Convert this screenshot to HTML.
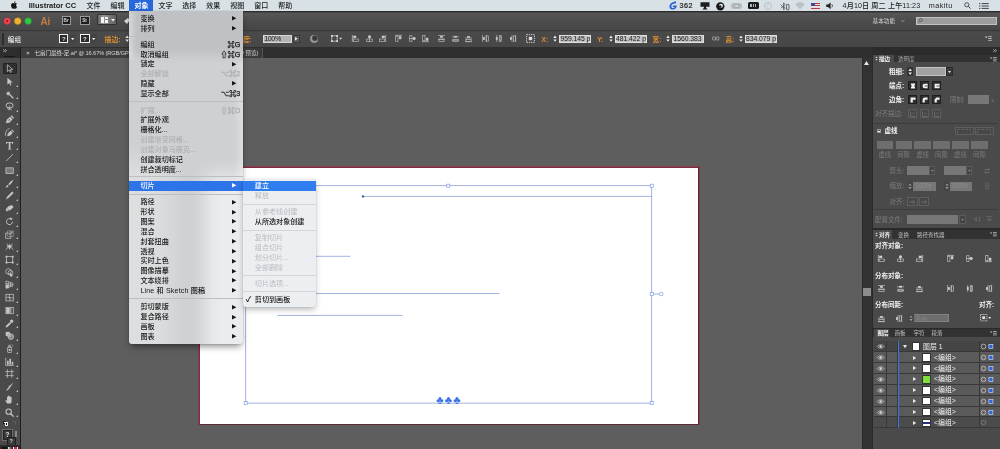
<!DOCTYPE html>
<html lang="zh"><head><meta charset="utf-8"><title>Illustrator CC</title>
<style>
html,body{margin:0;padding:0}
body{width:1000px;height:449px;overflow:hidden;position:relative;background:#5e5e5e;font-family:"Liberation Sans","Noto Sans CJK SC",sans-serif;}
div{position:absolute;box-sizing:border-box}
.t{white-space:nowrap}
svg{position:absolute;overflow:visible}
#root{left:0;top:0;width:1000px;height:449px;overflow:hidden;will-change:transform}
</style></head><body><div id="root">

<div style="left:0px;top:57.5px;width:1000px;height:392px;background:#5e5e5e"></div>
<div style="left:197.6px;top:166px;width:502.4px;height:259.4px;border-style:solid;border-width:1.4px 1.2px 1.2px 1.2px;border-color:#8e3c50 #823a42 #823a42 #8e3c50;background:#6a2c3a;box-shadow:0 0 1.6px 0.4px rgba(150,50,75,.5)"></div>
<div style="left:198.8px;top:167.4px;width:500.2px;height:257.2px;border-style:solid;border-width:1.1px 1px 1px 1px;border-color:#7a2e40 #5a2a30 #5a2a30 #7a2e40;background:#fff"></div>
<div style="left:199.7px;top:168.5px;width:498.4px;height:255.2px;background:#fff"></div>
<svg style="left:0;top:0" width="1000" height="449" viewBox="0 0 1000 449">
<g fill="none" stroke="#8499d6" stroke-width="0.75">
<rect x="245.7" y="185.7" width="406" height="217.4"/>
<line x1="363" y1="196.4" x2="651.7" y2="196.4"/>
<line x1="246" y1="256.3" x2="350.5" y2="256.3"/>
<line x1="246" y1="293.5" x2="499.5" y2="293.5"/>
<line x1="277.5" y1="315.4" x2="402.5" y2="315.4"/>
<line x1="652" y1="294" x2="660" y2="294"/>
</g>
<g fill="#fff" stroke="#7f9de3" stroke-width="0.7">
<rect x="446.8" y="184.2" width="3" height="3"/>
<rect x="650.2" y="184.2" width="3" height="3"/>
<rect x="650.2" y="292.5" width="3" height="3"/>
<rect x="650.2" y="401.6" width="3" height="3"/>
<rect x="244.2" y="401.6" width="3" height="3"/>
<rect x="659.7" y="292.4" width="3.2" height="3.2" rx="0.8"/>
</g>
<circle cx="363" cy="196.4" r="1.2" fill="#46579b"/>
</svg>
<div class="t" style="left:436.3px;top:394.2px;font-size:11.4px;line-height:12px;color:#3f74e2;font-weight:400;letter-spacing:1px">♣♣♣</div>
<div style="left:0px;top:0px;width:1000px;height:11.3px;background:#d8e1e6"></div>
<svg style="left:10.9px;top:1.1px" width="6.6" height="8" viewBox="0 0 14 17"><path fill="#161616" d="M10.9 9c0-2 1.600-2.900 1.700-3-0.900-1.400-2.400-1.600-2.900-1.600-1.200-0.100-2.400 0.700-3 0.700s-1.600-0.700-2.600-0.700c-1.300 0-2.600 0.800-3.300 2-1.400 2.400-0.400 6.100 1 8.100 0.700 1 1.500 2.100 2.500 2 1 0 1.400-0.600 2.600-0.600s1.500 0.600 2.600 0.600 1.800-1 2.400-2c0.800-1.100 1.100-2.200 1.100-2.300 0 0-2.100-0.800-2.100-3.200zM8.900 3c0.500-0.700 0.900-1.600 0.800-2.500-0.800 0-1.700 0.500-2.300 1.200-0.500 0.600-0.900 1.500-0.800 2.400 0.900 0.100 1.800-0.400 2.300-1.100z"/></svg>
<div class="t" style="left:28.7px;top:1.0999999999999996px;font-size:7.5px;line-height:10px;color:#1c1c1c;font-weight:700;">Illustrator CC</div>
<div class="t" style="left:86.4px;top:1.0999999999999996px;font-size:7px;line-height:10px;color:#1c1c1c;font-weight:500;">文件</div>
<div class="t" style="left:110.4px;top:1.0999999999999996px;font-size:7px;line-height:10px;color:#1c1c1c;font-weight:500;">编辑</div>
<div style="left:129.4px;top:0px;width:23.8px;height:11.3px;background:#2668db"></div>
<div class="t" style="left:134.4px;top:1.0999999999999996px;font-size:7px;line-height:10px;color:#fff;font-weight:700;">对象</div>
<div class="t" style="left:158.5px;top:1.0999999999999996px;font-size:7px;line-height:10px;color:#1c1c1c;font-weight:500;">文字</div>
<div class="t" style="left:182.3px;top:1.0999999999999996px;font-size:7px;line-height:10px;color:#1c1c1c;font-weight:500;">选择</div>
<div class="t" style="left:206.2px;top:1.0999999999999996px;font-size:7px;line-height:10px;color:#1c1c1c;font-weight:500;">效果</div>
<div class="t" style="left:230.2px;top:1.0999999999999996px;font-size:7px;line-height:10px;color:#1c1c1c;font-weight:500;">视图</div>
<div class="t" style="left:254.2px;top:1.0999999999999996px;font-size:7px;line-height:10px;color:#1c1c1c;font-weight:500;">窗口</div>
<div class="t" style="left:278.2px;top:1.0999999999999996px;font-size:7px;line-height:10px;color:#1c1c1c;font-weight:500;">帮助</div>
<svg style="left:669.2px;top:1.3px" width="8.8" height="8.8" viewBox="0 0 20 20"><path fill="#2a62dc" d="M15.500 0.500c-2 1-4.500 1.500-7 2.500C4 4.800 0.800 8.500 1 13c0.200 4 3.500 6.500 7.500 6.500 5 0 9-3.500 9.500-9H9.500l-1 3.200h4.200c-0.800 1.300-2 2-3.700 2-2.300 0-3.800-1.500-3.600-4 0.200-3 2.500-5 5.600-5.600 2-0.400 3.600-0.600 5.200-1.800z"/></svg>
<div class="t" style="left:679.6px;top:1.0999999999999996px;font-size:7.2px;line-height:10px;color:#1c1c1c;font-weight:500;letter-spacing:0.4px;-webkit-text-stroke:0.2px #1c1c1c">362</div>
<svg style="left:700px;top:2px" width="10" height="8" viewBox="0 0 10 8"><path fill="#1e1e1e" d="M0.500 0.300h9v4.400h-3.400v1.200l1.600 1.500h-5.400l1.600-1.500v-1.200h-3.400z"/></svg>
<svg style="left:716px;top:1.500px" width="8.600" height="8.600" viewBox="0 0 10 10"><circle cx="5" cy="5" r="4.800" fill="#161616"/><circle cx="5.800" cy="4.300" r="2.300" fill="#eef1f3"/><circle cx="4.900" cy="5.300" r="1.500" fill="#161616"/></svg>
<div style="left:731.2px;top:2.8px;width:10.6px;height:6px;background:#b3b9bd;border-radius:3px"></div>
<div style="left:734px;top:4px;width:5px;height:3.6px;background:#cdd3d7;border-radius:1.2px;border:0.500px solid #a3a9ad"></div>
<div style="left:748.4px;top:2.2px;width:10.2px;height:7px;background:#1a1a1a;border-radius:1.600px"></div>
<div style="left:750.2px;top:4px;width:1.4px;height:3.4px;background:#aeb4b8"></div>
<div style="left:752.6px;top:4px;width:1.4px;height:3.4px;background:#aeb4b8"></div>
<div style="left:755px;top:4px;width:1.4px;height:3.4px;background:#aeb4b8"></div>
<div style="left:764.4px;top:1.8px;width:8px;height:8px;border:1px solid #b9c0c4;border-radius:50%"></div>
<svg style="left:764.4px;top:1.8px" width="8" height="8" viewBox="0 0 8 8"><path d="M4 1.8V4L2.6 5" stroke="#b9c0c4" stroke-width="0.8" fill="none"/></svg>
<svg style="left:780.400px;top:1.5px" width="10" height="8.6" viewBox="0 0 10 8.6"><path d="M0.800 2.600L3.600 5.800V0.800L5.200 2.600 0.800 6.200M3.600 8V4.300L5.200 6.200 3.600 8" stroke="#555" stroke-width="0.8" fill="none"/><rect x="6.6" y="2.4" width="2.400" height="5.400" rx="0.500" fill="none" stroke="#333" stroke-width="0.700"/></svg>
<svg style="left:795px;top:2px" width="10" height="7.4" viewBox="0 0 10 7.4"><path fill="#bcc3c7" d="M5 7.2L0.2 2.2C2.9-0.4 7.1-0.4 9.8 2.2z"/></svg>
<div style="left:811.4px;top:2.6px;width:8.8px;height:6px;background:repeating-linear-gradient(#b83a45 0 0.9px,#e6dfe2 0.9px 1.8px)"></div>
<div style="left:811.4px;top:2.6px;width:4px;height:3.3px;background:#3b4c96"></div>
<svg style="left:825.6px;top:2px" width="8.4" height="7.6" viewBox="0 0 8.4 7.6"><path fill="#222" d="M0.2 2.6h1.8L4.6 0.4v6.8L2 5H0.2z"/><path d="M5.8 2.3c0.8 0.9 0.8 2.1 0 3" stroke="#222" stroke-width="0.8" fill="none"/></svg>
<div class="t" style="left:842.6px;top:1.0999999999999996px;font-size:7.1px;line-height:10px;color:#1c1c1c;font-weight:500;letter-spacing:0.13px">4月10日 周二 上午11:23</div>
<div class="t" style="left:928.8px;top:1.0999999999999996px;font-size:7.2px;line-height:10px;color:#1c1c1c;font-weight:500;letter-spacing:0.45px">makitu</div>
<svg style="left:963.6px;top:2.2px" width="7" height="7" viewBox="0 0 7 7"><circle cx="2.8" cy="2.8" r="2.1" stroke="#333" stroke-width="0.8" fill="none"/><path d="M4.3 4.3L6.6 6.6" stroke="#333" stroke-width="0.9"/></svg>
<svg style="left:978.6px;top:2.8px" width="10" height="6" viewBox="0 0 10 6"><path d="M0 0.6h1.4M2.6 0.6h7.2M0 3h1.4M2.6 3h7.2M0 5.4h1.4M2.6 5.4h7.2" stroke="#333" stroke-width="0.9"/></svg>
<div style="left:0px;top:11.3px;width:1000px;height:18.4px;background:linear-gradient(#2a2a2a 0,#2e2e2e 5%,#565656 10%,#4d4d4d 50%,#464646 100%)"></div>
<svg style="left:0;top:11px" width="40" height="20" viewBox="0 0 40 20"><circle cx="7.2" cy="10.1" r="3.35" fill="#ee4750" stroke="#b8323a" stroke-width="0.5"/><circle cx="7.2" cy="10.1" r="1.1" fill="#8c1219"/><circle cx="17.7" cy="10.1" r="3.35" fill="#f3b02e" stroke="#c08a22" stroke-width="0.5"/><circle cx="28.1" cy="10.1" r="3.35" fill="#33c646" stroke="#23952f" stroke-width="0.5"/></svg>
<div class="t" style="left:40.4px;top:15.8px;font-size:10px;line-height:12px;color:#c87a42;font-weight:700;">Ai</div>
<div style="left:62px;top:16.4px;width:9.2px;height:8.8px;background:#1d1d1d;border:0.9px solid #9a9a9a"></div>
<div class="t" style="left:63.6px;top:17.9px;font-size:4.6px;line-height:6px;color:#ddd;font-weight:700;">Br</div>
<div style="left:80.2px;top:16.4px;width:9.4px;height:8.8px;background:#1d1d1d;border:0.9px solid #9a9a9a"></div>
<div class="t" style="left:82.3px;top:17.9px;font-size:4.6px;line-height:6px;color:#ddd;font-weight:700;">St</div>
<div style="left:97px;top:14.4px;width:19.8px;height:10.4px;background:linear-gradient(90deg,#6c6c6c,#979797 32%,#787878 65%,#626262);border-radius:1.2px;border:0.6px solid #303030"></div>
<div style="left:100.6px;top:16.5px;width:3.4px;height:6.4px;background:#f4f4f4"></div>
<div style="left:104.8px;top:16.5px;width:3px;height:2.8px;background:#f4f4f4"></div>
<div style="left:104.8px;top:20.1px;width:3px;height:2.8px;background:#f4f4f4"></div>
<svg style="left:110.6px;top:18.8px" width="4" height="2.6" viewBox="0 0 4 2.6"><path d="M0 0h4L2 2.6z" fill="#f0f0f0"/></svg>
<svg style="left:122.5px;top:17px" width="8" height="8" viewBox="0 0 8 8"><path d="M1 4l4-3 2 2-3 4z" fill="#ddd"/></svg>
<div class="t" style="left:872.6px;top:17.0px;font-size:5.6px;line-height:8px;color:#d6d6d6;font-weight:400;">基本功能</div>
<svg style="left:900.6px;top:20.4px" width="3.6" height="2.2" viewBox="0 0 3.6 2.2"><path d="M0.2 0.2L1.8 1.8 3.4 0.2" stroke="#bbb" stroke-width="0.7" fill="none"/></svg>
<div style="left:915.8px;top:17px;width:81px;height:8px;background:#9c9c9c;border:0.6px solid #c2c2c2"></div>
<svg style="left:918.2px;top:18.4px" width="5" height="5" viewBox="0 0 5 5"><circle cx="3" cy="2" r="1.5" stroke="#555" stroke-width="0.7" fill="none"/><path d="M1.9 3.1L0.4 4.6" stroke="#555" stroke-width="0.8"/></svg>
<div style="left:0px;top:29.7px;width:1000px;height:17.5px;background:linear-gradient(#3a3a3a 0,#3a3a3a 5%,#4a4a4a 10%,#474747 100%)"></div>
<div style="left:2.2px;top:33px;width:1.6px;height:12px;background:#2c2c2c"></div>
<div class="t" style="left:7.8px;top:35.0px;font-size:6.6px;line-height:9px;color:#f2f2f2;font-weight:500;">编组</div>
<div style="left:58.8px;top:34px;width:9.6px;height:9.2px;background:#2a2a2a;border:1px solid #f2f2f2"></div>
<div class="t" style="left:61.9px;top:34.7px;font-size:6px;line-height:8px;color:#e8e8e8;font-weight:700;">?</div>
<div style="left:69.8px;top:34.4px;width:6px;height:8.6px;background:#434343"></div>
<svg style="left:71.2px;top:37.8px" width="3.4" height="2.2" viewBox="0 0 3.4 2.2"><path d="M0 0h3.4L1.7 2.2z" fill="#e6e6e6"/></svg>
<div style="left:80px;top:34px;width:9.6px;height:9.2px;background:#2a2a2a;border:1px solid #f2f2f2"></div>
<div class="t" style="left:83.1px;top:34.7px;font-size:6px;line-height:8px;color:#e8e8e8;font-weight:700;">?</div>
<div style="left:91px;top:34.4px;width:6px;height:8.6px;background:#434343"></div>
<svg style="left:92.4px;top:37.8px" width="3.4" height="2.2" viewBox="0 0 3.4 2.2"><path d="M0 0h3.4L1.7 2.2z" fill="#e6e6e6"/></svg>
<div class="t" style="left:104.6px;top:35.0px;font-size:6.8px;line-height:9px;color:#dc8e30;font-weight:700;">描边:</div>
<svg style="left:124.6px;top:35px" width="4.4" height="7.6" viewBox="0 0 4.4 7.6"><path d="M0.4 3L2.2 0.6 4 3zM0.4 4.6h3.6L2.2 7z" fill="#eee"/></svg>
<div class="t" style="left:236.6px;top:35.0px;font-size:6.8px;line-height:9px;color:#dc8e30;font-weight:700;letter-spacing:-0.5px">明度:</div>
<div style="left:263px;top:34.6px;width:29.2px;height:8.2px;background:#b4b4b4;border:0.5px solid #d8d8d8"></div>
<div class="t" style="left:264.2px;top:34.8px;font-size:7px;line-height:8px;color:#1e1e1e;font-weight:400;letter-spacing:-0.3px">100%</div>
<div style="left:293.4px;top:34.6px;width:6.4px;height:8.2px;background:#5b5b5b;border:0.5px solid #383838"></div>
<svg style="left:295.4px;top:37px" width="2.6" height="3.6" viewBox="0 0 2.6 3.6"><path d="M0 0l2.6 1.8L0 3.6z" fill="#eee"/></svg>
<div style="left:310px;top:34.6px;width:8.2px;height:8.2px;background:radial-gradient(circle at 60% 40%,#3a3a3a 0,#3a3a3a 30%,#aaa 55%,#777 75%,#3c3c3c 100%);border-radius:50%"></div>
<svg style="left:331.4px;top:35.2px" width="11.4" height="7.4" viewBox="0 0 13 8.4"><rect x="1" y="1" width="6" height="6" fill="none" stroke="#ddd" stroke-width="0.8"/><path d="M0 0h2v2H0zM6 0h2v2H6zM0 6h2v2H0zM6 6h2v2H6z" fill="#ddd"/><path d="M9.4 3.2h3.2L11 5.4z" fill="#ddd"/></svg>
<svg style="left:352.1px;top:35.2px" width="7.0" height="7.0" viewBox="0 0 8 8"><path d="M0.4 0v8" stroke="#c8c8c8" stroke-width="0.8"/><rect x="1.4" y="0.8" width="3.4" height="2.6" fill="#c8c8c8"/><rect x="1.4" y="4.6" width="6" height="2.6" fill="none" stroke="#c8c8c8" stroke-width="0.7"/></svg>
<svg style="left:365.5px;top:35.2px" width="7.0" height="7.0" viewBox="0 0 8 8"><path d="M4 0v8" stroke="#c8c8c8" stroke-width="0.7"/><rect x="2.4" y="0.8" width="3.2" height="2.6" fill="#c8c8c8"/><rect x="0.8" y="4.6" width="6.4" height="2.6" fill="none" stroke="#c8c8c8" stroke-width="0.7"/></svg>
<svg style="left:378.9px;top:35.2px" width="7.0" height="7.0" viewBox="0 0 8 8"><path d="M7.6 0v8" stroke="#c8c8c8" stroke-width="0.8"/><rect x="3.2" y="0.8" width="3.4" height="2.6" fill="#c8c8c8"/><rect x="0.6" y="4.6" width="6" height="2.6" fill="none" stroke="#c8c8c8" stroke-width="0.7"/></svg>
<svg style="left:395.1px;top:35.2px" width="7.0" height="7.0" viewBox="0 0 8 8"><path d="M0 0.4h8" stroke="#c8c8c8" stroke-width="0.8"/><rect x="0.8" y="1.4" width="2.6" height="6" fill="none" stroke="#c8c8c8" stroke-width="0.7"/><rect x="4.6" y="1.4" width="2.6" height="3.4" fill="#c8c8c8"/></svg>
<svg style="left:408.5px;top:35.2px" width="7.0" height="7.0" viewBox="0 0 8 8"><path d="M0 4h8" stroke="#c8c8c8" stroke-width="0.7"/><rect x="0.8" y="0.8" width="2.6" height="6.4" fill="none" stroke="#c8c8c8" stroke-width="0.7"/><rect x="4.6" y="2.4" width="2.6" height="3.2" fill="#c8c8c8"/></svg>
<svg style="left:422.1px;top:35.2px" width="7.0" height="7.0" viewBox="0 0 8 8"><path d="M0 7.6h8" stroke="#c8c8c8" stroke-width="0.8"/><rect x="0.8" y="0.6" width="2.6" height="6" fill="none" stroke="#c8c8c8" stroke-width="0.7"/><rect x="4.6" y="3.2" width="2.6" height="3.4" fill="#c8c8c8"/></svg>
<svg style="left:438.1px;top:35.2px" width="7.0" height="7.0" viewBox="0 0 8 8"><path d="M0 0.6h8M0 4.6h8" stroke="#c8c8c8" stroke-width="0.7"/><rect x="2.4" y="1.2" width="3.2" height="2" fill="#c8c8c8"/><rect x="1" y="5.2" width="6" height="2.2" fill="none" stroke="#c8c8c8" stroke-width="0.7"/></svg>
<svg style="left:451.7px;top:35.2px" width="7.0" height="7.0" viewBox="0 0 8 8"><path d="M0 2h8M0 6h8" stroke="#c8c8c8" stroke-width="0.7"/><rect x="2.4" y="1" width="3.2" height="2" fill="#c8c8c8"/><rect x="1" y="4.8" width="6" height="2.4" fill="none" stroke="#c8c8c8" stroke-width="0.7"/></svg>
<svg style="left:465.3px;top:35.2px" width="7.0" height="7.0" viewBox="0 0 8 8"><path d="M0 3.4h8M0 7.6h8" stroke="#c8c8c8" stroke-width="0.7"/><rect x="2.4" y="1.2" width="3.2" height="2" fill="#c8c8c8"/><rect x="1" y="5" width="6" height="2.2" fill="none" stroke="#c8c8c8" stroke-width="0.7"/></svg>
<svg style="left:481.5px;top:35.2px" width="7.0" height="7.0" viewBox="0 0 8 8"><path d="M0.6 0v8M4.6 0v8" stroke="#c8c8c8" stroke-width="0.7"/><rect x="1.2" y="2.4" width="2" height="3.2" fill="#c8c8c8"/><rect x="5.2" y="1" width="2.2" height="6" fill="none" stroke="#c8c8c8" stroke-width="0.7"/></svg>
<svg style="left:495.1px;top:35.2px" width="7.0" height="7.0" viewBox="0 0 8 8"><path d="M2 0v8M6 0v8" stroke="#c8c8c8" stroke-width="0.7"/><rect x="1" y="2.4" width="2" height="3.2" fill="#c8c8c8"/><rect x="4.8" y="1" width="2.4" height="6" fill="none" stroke="#c8c8c8" stroke-width="0.7"/></svg>
<svg style="left:508.5px;top:35.2px" width="7.0" height="7.0" viewBox="0 0 8 8"><path d="M3.4 0v8M7.6 0v8" stroke="#c8c8c8" stroke-width="0.7"/><rect x="1.2" y="2.4" width="2" height="3.2" fill="#c8c8c8"/><rect x="5" y="1" width="2.2" height="6" fill="none" stroke="#c8c8c8" stroke-width="0.7"/></svg>
<svg style="left:526px;top:34.4px" width="9" height="9" viewBox="0 0 9 9"><rect x="0.6" y="0.6" width="7.8" height="7.8" fill="none" stroke="#e0e0e0" stroke-width="0.9" stroke-dasharray="1.3 0.9"/><rect x="2.8" y="2.8" width="3.4" height="3.4" fill="#e0e0e0"/></svg>
<div class="t" style="left:541.6px;top:34.9px;font-size:6.6px;line-height:9px;color:#dc8e30;font-weight:700;">X:</div>
<svg style="left:553.4px;top:35.2px" width="4" height="7.4" viewBox="0 0 4 7.4"><path d="M0.3 2.9L2 0.6 3.7 2.9zM0.3 4.5h3.4L2 6.8z" fill="#eee"/></svg>
<div style="left:559.4px;top:34.7px;width:32px;height:8px;background:#c2c2c2;border:0.5px solid #dedede;overflow:hidden"></div>
<div class="t" style="left:560.5px;top:34.9px;font-size:6.8px;line-height:8px;color:#1a1a1a;font-weight:400;letter-spacing:-0.05px">959.145 p</div>
<div class="t" style="left:597.2px;top:34.9px;font-size:6.6px;line-height:9px;color:#dc8e30;font-weight:700;">Y:</div>
<svg style="left:609px;top:35.2px" width="4" height="7.4" viewBox="0 0 4 7.4"><path d="M0.3 2.9L2 0.6 3.7 2.9zM0.3 4.5h3.4L2 6.8z" fill="#eee"/></svg>
<div style="left:615px;top:34.7px;width:31.6px;height:8px;background:#c2c2c2;border:0.5px solid #dedede;overflow:hidden"></div>
<div class="t" style="left:616.1px;top:34.9px;font-size:6.8px;line-height:8px;color:#1a1a1a;font-weight:400;letter-spacing:-0.05px">481.422 p</div>
<div class="t" style="left:652.6px;top:34.9px;font-size:6.6px;line-height:9px;color:#dc8e30;font-weight:700;">宽:</div>
<svg style="left:666.4px;top:35.2px" width="4" height="7.4" viewBox="0 0 4 7.4"><path d="M0.3 2.9L2 0.6 3.7 2.9zM0.3 4.5h3.4L2 6.8z" fill="#eee"/></svg>
<div style="left:672.4px;top:34.7px;width:31.2px;height:8px;background:#c2c2c2;border:0.5px solid #dedede;overflow:hidden"></div>
<div class="t" style="left:673.5px;top:34.9px;font-size:6.8px;line-height:8px;color:#1a1a1a;font-weight:400;letter-spacing:-0.05px">1560.383</div>
<svg style="left:711.6px;top:36.4px" width="7.4" height="5" viewBox="0 0 7.4 5"><rect x="0.5" y="1" width="3" height="3" rx="0.8" fill="none" stroke="#bbb" stroke-width="0.7"/><rect x="3.9" y="1" width="3" height="3" rx="0.8" fill="none" stroke="#bbb" stroke-width="0.7"/></svg>
<div class="t" style="left:725.4px;top:34.9px;font-size:6.6px;line-height:9px;color:#dc8e30;font-weight:700;">高:</div>
<svg style="left:738.8px;top:35.2px" width="4" height="7.4" viewBox="0 0 4 7.4"><path d="M0.3 2.9L2 0.6 3.7 2.9zM0.3 4.5h3.4L2 6.8z" fill="#eee"/></svg>
<div style="left:745px;top:34.7px;width:32px;height:8px;background:#c2c2c2;border:0.5px solid #dedede;overflow:hidden"></div>
<div class="t" style="left:746.1px;top:34.9px;font-size:6.8px;line-height:8px;color:#1a1a1a;font-weight:400;letter-spacing:-0.05px">834.079 p</div>
<svg style="left:984.6px;top:36px" width="7" height="5" viewBox="0 0 7 5"><path d="M0 0.6h2.4L1.2 2.2z" fill="#ddd"/><path d="M3.2 0.6h3.6M3.2 2.5h3.6M3.2 4.4h3.6" stroke="#ddd" stroke-width="0.7"/></svg>
<div style="left:0px;top:47.2px;width:1000px;height:10.4px;background:#2f2f2f"></div>
<div style="left:21px;top:47.6px;width:131px;height:10px;background:#3e3e3e;border-right:0.6px solid #555"></div>
<div style="left:152.4px;top:47.6px;width:110.2px;height:10px;background:#3a3a3a;border-right:0.6px solid #555"></div>
<div class="t" style="right:741.6px;top:49.0px;font-size:5.6px;line-height:8px;color:#d8d8d8;font-weight:400;">未标题-1* @ 66.67% (RGB/GPU 预览)</div>
<div class="t" style="left:156.5px;top:48.9px;font-size:5.6px;line-height:8px;color:#ccc;font-weight:700;">×</div>
<div class="t" style="left:26.2px;top:48.9px;font-size:5.6px;line-height:8px;color:#ccc;font-weight:700;">×</div>
<div class="t" style="left:34.4px;top:49.0px;font-size:5.6px;line-height:8px;color:#d8d8d8;font-weight:400;letter-spacing:-0.08px">七扇门最终-定.ai* @ 16.67% (RGB/GPU 预览)</div>
<div style="left:0px;top:47.2px;width:21px;height:402px;background:#1f1f1f"></div>
<div style="left:0px;top:47.2px;width:19.8px;height:402px;background:#4a4a4a"></div>
<div style="left:0px;top:47.2px;width:19.8px;height:10.6px;background:#2d2d2d"></div>
<svg style="left:2.6px;top:48.6px" width="4" height="3.4" viewBox="0 0 4 3.4"><path d="M0.3 0.3L1.7 1.7 0.3 3.1M2.2 0.3L3.6 1.7 2.2 3.1" stroke="#e0e0e0" stroke-width="0.7" fill="none"/></svg>
<div style="left:4px;top:56px;width:11px;height:1.2px;background:#161616"></div>
<div style="left:2.6px;top:63.2px;width:14.4px;height:10.6px;background:#303030;border:0.5px solid #232323;border-radius:1px"></div>
<svg style="left:5.4px;top:64.20px" width="9.200" height="9.200" viewBox="0 0 10 10"><path d="M2.6 0.8v7.6l2-1.8 1.3 2.6 1.1-0.5-1.3-2.6 2.7-0.2z" fill="none" stroke="#c6c6c6" stroke-width="0.8"/></svg>
<svg style="left:5.4px;top:76.92px" width="9.200" height="9.200" viewBox="0 0 10 10"><path d="M2.6 0.8v7.6l2-1.8 1.3 2.6 1.1-0.5-1.3-2.6 2.7-0.2z" fill="#c6c6c6"/></svg>
<svg style="left:15.6px;top:84.72px" width="2" height="2" viewBox="0 0 2 2"><path d="M2 0v2H0z" fill="#bdbdbd"/></svg>
<svg style="left:5.4px;top:89.64px" width="9.200" height="9.200" viewBox="0 0 10 10"><path d="M4.4 4.4L9 9" stroke="#c6c6c6" stroke-width="1.3"/><path d="M3.2 0.6l0.7 1.9 2-0.5-1.2 1.6 1.4 1.5-2-0.2-0.9 1.9-0.5-2-2-0.4 1.7-1-0.6-2 1.6 1.3z" fill="#c6c6c6"/></svg>
<svg style="left:15.6px;top:97.44px" width="2" height="2" viewBox="0 0 2 2"><path d="M2 0v2H0z" fill="#bdbdbd"/></svg>
<svg style="left:5.4px;top:102.36px" width="9.200" height="9.200" viewBox="0 0 10 10"><ellipse cx="5" cy="3.8" rx="3.8" ry="2.8" fill="none" stroke="#c6c6c6" stroke-width="1"/><path d="M3.4 6.2c-1 1 0 2.4 1.2 1.6 0.8-0.6 0.2-1.6-0.6-1.2M5 4v4.6l1.2-1 0.8 1.4" stroke="#c6c6c6" stroke-width="0.8" fill="none"/></svg>
<svg style="left:15.6px;top:110.16px" width="2" height="2" viewBox="0 0 2 2"><path d="M2 0v2H0z" fill="#bdbdbd"/></svg>
<svg style="left:5.4px;top:115.08px" width="9.200" height="9.200" viewBox="0 0 10 10"><path d="M1 9l1-4 3.6-3 2.6 2.6-3 3.6zM6.2 1.4l1-1 2.6 2.6-1 1z" fill="#c6c6c6"/><circle cx="4.6" cy="5.4" r="0.8" fill="#4a4a4a"/></svg>
<svg style="left:15.6px;top:122.88px" width="2" height="2" viewBox="0 0 2 2"><path d="M2 0v2H0z" fill="#bdbdbd"/></svg>
<svg style="left:5.4px;top:127.80px" width="9.200" height="9.200" viewBox="0 0 10 10"><path d="M2.4 9l0.8-3.4 3-2.6 2.2 2.2-2.6 3zM6.8 2.4l0.9-0.9 2.2 2.2-0.9 0.9z" fill="#c6c6c6"/><path d="M0.6 8.6C0 4 2 1.2 5 0.6" stroke="#c6c6c6" stroke-width="0.8" fill="none"/></svg>
<svg style="left:15.6px;top:135.60px" width="2" height="2" viewBox="0 0 2 2"><path d="M2 0v2H0z" fill="#bdbdbd"/></svg>
<svg style="left:5.4px;top:140.52px" width="9.200" height="9.200" viewBox="0 0 10 10"><path d="M1.2 1h7.6v2.2h-0.7c-0.2-1-0.6-1.3-1.6-1.3h-0.6v6c0 0.6 0.3 0.8 1.1 0.8v0.6h-4v-0.6c0.8 0 1.1-0.2 1.1-0.8v-6h-0.6c-1 0-1.4 0.3-1.6 1.3h-0.7z" fill="#c6c6c6"/></svg>
<svg style="left:15.6px;top:148.32px" width="2" height="2" viewBox="0 0 2 2"><path d="M2 0v2H0z" fill="#bdbdbd"/></svg>
<svg style="left:5.4px;top:153.24px" width="9.200" height="9.200" viewBox="0 0 10 10"><path d="M1.4 8.8L8.6 1.2" stroke="#c6c6c6" stroke-width="0.9"/></svg>
<svg style="left:15.6px;top:161.04px" width="2" height="2" viewBox="0 0 2 2"><path d="M2 0v2H0z" fill="#bdbdbd"/></svg>
<svg style="left:5.4px;top:165.96px" width="9.200" height="9.200" viewBox="0 0 10 10"><rect x="1" y="2" width="8" height="6.2" fill="#7a7a7a" stroke="#c6c6c6" stroke-width="0.8"/></svg>
<svg style="left:15.6px;top:173.76px" width="2" height="2" viewBox="0 0 2 2"><path d="M2 0v2H0z" fill="#bdbdbd"/></svg>
<svg style="left:5.4px;top:178.68px" width="9.200" height="9.200" viewBox="0 0 10 10"><path d="M9.2 0.6c-2 1-4.4 3.4-5.6 5.2l1 1c1.8-1.2 4-3.8 4.600-6.200zM3 6.600c-1.400 0-1.400 1.800-2.600 2.400 1.600 0.400 3.400-0.200 3.400-1.600z" fill="#c6c6c6"/></svg>
<svg style="left:15.6px;top:186.48px" width="2" height="2" viewBox="0 0 2 2"><path d="M2 0v2H0z" fill="#bdbdbd"/></svg>
<svg style="left:5.4px;top:191.40px" width="9.200" height="9.200" viewBox="0 0 10 10"><path d="M7.800 0.600l1.600 1.600-5.800 5.800-2.400 0.800 0.800-2.400z" fill="#c6c6c6"/><path d="M1 9.400l0.600-0.600" stroke="#c6c6c6" stroke-width="0.600"/></svg>
<svg style="left:15.6px;top:199.20px" width="2" height="2" viewBox="0 0 2 2"><path d="M2 0v2H0z" fill="#bdbdbd"/></svg>
<svg style="left:5.4px;top:204.12px" width="9.200" height="9.200" viewBox="0 0 10 10"><path d="M3.400 2.600l4-1.600 2 2.200-3.400 3.400-4 1.600-1.400-2.200z" fill="#c6c6c6"/><path d="M2.600 5.200l2 2.400" stroke="#4a4a4a" stroke-width="0.700"/></svg>
<svg style="left:15.6px;top:211.92px" width="2" height="2" viewBox="0 0 2 2"><path d="M2 0v2H0z" fill="#bdbdbd"/></svg>
<svg style="left:5.4px;top:216.84px" width="9.200" height="9.200" viewBox="0 0 10 10"><path d="M8.200 5a3.300 3.300 0 1 1-1.400-2.700" fill="none" stroke="#c6c6c6" stroke-width="1"/><path d="M5.600 0.400l2.800 1.400-2.200 2z" fill="#c6c6c6"/></svg>
<svg style="left:15.6px;top:224.64px" width="2" height="2" viewBox="0 0 2 2"><path d="M2 0v2H0z" fill="#bdbdbd"/></svg>
<svg style="left:5.4px;top:229.56px" width="9.200" height="9.200" viewBox="0 0 10 10"><rect x="0.800" y="3.400" width="5.600" height="5.600" fill="none" stroke="#c6c6c6" stroke-width="0.800"/><rect x="2.800" y="1" width="6.400" height="6" fill="none" stroke="#c6c6c6" stroke-width="0.700" stroke-dasharray="1 0.600"/><path d="M4.400 5.400l3-3M7.800 4.200V2H5.600" stroke="#c6c6c6" stroke-width="0.700" fill="none"/></svg>
<svg style="left:15.6px;top:237.36px" width="2" height="2" viewBox="0 0 2 2"><path d="M2 0v2H0z" fill="#bdbdbd"/></svg>
<svg style="left:5.4px;top:242.28px" width="9.200" height="9.200" viewBox="0 0 10 10"><path d="M0.800 8.400c2-0.600 2.600-4 1.400-6.600M9.200 8.400c-2-0.600-2.600-4-1.400-6.600" stroke="#c6c6c6" stroke-width="0.800" fill="none"/><path d="M3 4.600l2-2.400 2 2.400-2 3.800z" fill="#c6c6c6"/></svg>
<svg style="left:15.6px;top:250.08px" width="2" height="2" viewBox="0 0 2 2"><path d="M2 0v2H0z" fill="#bdbdbd"/></svg>
<svg style="left:5.4px;top:255.00px" width="9.200" height="9.200" viewBox="0 0 10 10"><rect x="1.600" y="1.800" width="6.800" height="6.400" fill="none" stroke="#c6c6c6" stroke-width="0.800"/><path d="M0.600 0.800h2v2h-2zM7.400 0.800h2v2h-2zM0.600 7.200h2v2h-2zM7.400 7.200h2v2h-2z" fill="#c6c6c6"/></svg>
<svg style="left:15.6px;top:262.80px" width="2" height="2" viewBox="0 0 2 2"><path d="M2 0v2H0z" fill="#bdbdbd"/></svg>
<svg style="left:5.4px;top:267.72px" width="9.200" height="9.200" viewBox="0 0 10 10"><circle cx="3.800" cy="3.800" r="3" fill="none" stroke="#c6c6c6" stroke-width="0.800"/><circle cx="6" cy="5.200" r="2.600" fill="none" stroke="#c6c6c6" stroke-width="0.800"/><path d="M5.400 5v4.600l1.200-1 0.900 1.200 0.700-0.500-0.900-1.200 1.500-0.200z" fill="#c6c6c6"/></svg>
<svg style="left:15.6px;top:275.52px" width="2" height="2" viewBox="0 0 2 2"><path d="M2 0v2H0z" fill="#bdbdbd"/></svg>
<svg style="left:5.4px;top:280.44px" width="9.200" height="9.200" viewBox="0 0 10 10"><path d="M1 1v8l7.600-2.400V3.400zM3.600 1.800v6.400M6 2.600v4.800M1 3.800l7.600 0.800M1 6.400l7.600-0.800" stroke="#c6c6c6" stroke-width="0.700" fill="none"/><path d="M1 5h3v4H1z" fill="#c6c6c6"/></svg>
<svg style="left:15.6px;top:288.24px" width="2" height="2" viewBox="0 0 2 2"><path d="M2 0v2H0z" fill="#bdbdbd"/></svg>
<svg style="left:5.4px;top:293.16px" width="9.200" height="9.200" viewBox="0 0 10 10"><rect x="1" y="1.400" width="8" height="7.200" fill="none" stroke="#c6c6c6" stroke-width="0.800"/><path d="M1 5c2.600-1.600 5.400 1.600 8 0M5 1.400c-1.400 2.400 1.400 4.800 0 7.200" stroke="#c6c6c6" stroke-width="0.700" fill="none"/><circle cx="5" cy="5" r="0.900" fill="#c6c6c6"/></svg>
<svg style="left:15.6px;top:300.96px" width="2" height="2" viewBox="0 0 2 2"><path d="M2 0v2H0z" fill="#bdbdbd"/></svg>
<svg style="left:5.4px;top:305.88px" width="9.200" height="9.200" viewBox="0 0 10 10"><rect x="1" y="1.600" width="8" height="6.800" fill="none" stroke="#c6c6c6" stroke-width="0.800"/><path d="M1.400 2h3.800v6H1.400z" fill="#c6c6c6"/><path d="M5.200 2h1.800v6H5.200z" fill="#9a9a9a"/></svg>
<svg style="left:15.6px;top:313.68px" width="2" height="2" viewBox="0 0 2 2"><path d="M2 0v2H0z" fill="#bdbdbd"/></svg>
<svg style="left:5.4px;top:318.60px" width="9.200" height="9.200" viewBox="0 0 10 10"><path d="M6.600 0.800c1-1 3.200 1.200 2.400 2.400l-1.600 1.400-2.400-2.400zM5.400 3.200l1.400 1.400-4 4-1.600 0.600-0.600-0.400 0.800-1.600z" fill="#c6c6c6"/></svg>
<svg style="left:15.6px;top:326.40px" width="2" height="2" viewBox="0 0 2 2"><path d="M2 0v2H0z" fill="#bdbdbd"/></svg>
<svg style="left:5.4px;top:331.32px" width="9.200" height="9.200" viewBox="0 0 10 10"><rect x="0.800" y="1" width="4.400" height="4.400" fill="#c6c6c6"/><circle cx="6.400" cy="6.200" r="3" fill="#8a8a8a" stroke="#c6c6c6" stroke-width="0.800"/><rect x="2.600" y="2.600" width="4" height="4" fill="#b0b0b0"/></svg>
<svg style="left:15.6px;top:339.12px" width="2" height="2" viewBox="0 0 2 2"><path d="M2 0v2H0z" fill="#bdbdbd"/></svg>
<svg style="left:5.4px;top:344.04px" width="9.200" height="9.200" viewBox="0 0 10 10"><rect x="2.800" y="3.600" width="4.400" height="5.600" rx="0.600" fill="none" stroke="#c6c6c6" stroke-width="0.800"/><path d="M3.600 3.600v-1.200h2.800v1.200M4.400 2.400v-1.200h1.600" stroke="#c6c6c6" stroke-width="0.800" fill="none"/><circle cx="5" cy="6.400" r="1.100" fill="#c6c6c6"/><path d="M7.400 0.600h0.800M8.200 1.800h0.800M7.400 3h0.800" stroke="#c6c6c6" stroke-width="0.600"/></svg>
<svg style="left:15.6px;top:351.84px" width="2" height="2" viewBox="0 0 2 2"><path d="M2 0v2H0z" fill="#bdbdbd"/></svg>
<svg style="left:5.4px;top:356.76px" width="9.200" height="9.200" viewBox="0 0 10 10"><path d="M0.800 0.800v8.400h8.600" stroke="#c6c6c6" stroke-width="0.800" fill="none"/><path d="M2.200 4h1.800v4.400H2.200zM4.800 2h1.800v6.400H4.800zM7.400 5.200h1.600v3.200H7.400z" fill="#c6c6c6"/></svg>
<svg style="left:15.6px;top:364.56px" width="2" height="2" viewBox="0 0 2 2"><path d="M2 0v2H0z" fill="#bdbdbd"/></svg>
<svg style="left:5.4px;top:369.48px" width="9.200" height="9.200" viewBox="0 0 10 10"><path d="M2.600 0.400v9.200M7.400 0.400v9.200M0.400 2.800h9.200M0.400 7.200h9.200" stroke="#c6c6c6" stroke-width="0.800" fill="none"/></svg>
<svg style="left:15.6px;top:377.28px" width="2" height="2" viewBox="0 0 2 2"><path d="M2 0v2H0z" fill="#bdbdbd"/></svg>
<svg style="left:5.4px;top:382.20px" width="9.200" height="9.200" viewBox="0 0 10 10"><path d="M9.400 0.600L3.400 5.400l1.400 1.400z" fill="#c6c6c6"/><path d="M3.800 6L1 9.200l1.800-0.200 2.200-2z" fill="#c6c6c6"/></svg>
<svg style="left:15.6px;top:390.00px" width="2" height="2" viewBox="0 0 2 2"><path d="M2 0v2H0z" fill="#bdbdbd"/></svg>
<svg style="left:5.4px;top:394.92px" width="9.200" height="9.200" viewBox="0 0 10 10"><path d="M2.400 9.200c-1-1.600-2-2.800-2-3.600 0.400-0.600 1.200 0 1.800 0.800V2.200c0-0.800 1.200-0.800 1.200 0V1.200c0-0.800 1.300-0.800 1.300 0v0.600c0-0.800 1.300-0.800 1.300 0v1c0-0.700 1.200-0.700 1.200 0v4c0 1-0.400 1.600-0.800 2.400z" fill="#c6c6c6"/></svg>
<svg style="left:15.6px;top:402.72px" width="2" height="2" viewBox="0 0 2 2"><path d="M2 0v2H0z" fill="#bdbdbd"/></svg>
<svg style="left:5.4px;top:407.64px" width="9.200" height="9.200" viewBox="0 0 10 10"><circle cx="4" cy="4" r="2.900" fill="none" stroke="#c6c6c6" stroke-width="1.100"/><path d="M6.200 6.200L9.400 9.400" stroke="#c6c6c6" stroke-width="1.500"/></svg>
<svg style="left:15.6px;top:415.44px" width="2" height="2" viewBox="0 0 2 2"><path d="M2 0v2H0z" fill="#bdbdbd"/></svg>
<div style="left:2.8px;top:420.6px;width:3.6px;height:3.6px;background:#fff;border:0.4px solid #222"></div>
<div style="left:4.6px;top:422.4px;width:3.6px;height:3.6px;background:#111;border:0.6px solid #eee"></div>
<svg style="left:12px;top:420.400px" width="5" height="5" viewBox="0 0 5 5"><path d="M0.600 1.600h2.800v2.800" stroke="#6a6a6a" stroke-width="0.700" fill="none"/></svg>
<div style="left:2.6px;top:430px;width:9.8px;height:9.8px;background:#3a3a3a;border:0.700px solid #222;outline:0.500px solid #6e6e6e"></div>
<div class="t" style="left:5.6px;top:430.8px;font-size:6.4px;line-height:8px;color:#e6e6e6;font-weight:700;">?</div>
<div style="left:7.2px;top:437.4px;width:8.4px;height:8.4px;background:#3a3a3a;border:0.700px solid #222"></div>
<div class="t" style="left:9.4px;top:437.9px;font-size:5.4px;line-height:7px;color:#cfcfcf;font-weight:700;">?</div>
<div style="left:15.4px;top:431px;width:1.2px;height:6px;background:#8a8a8a"></div>
<div style="left:0px;top:445.4px;width:19.8px;height:3.6px;background:#2a2a2a"></div>
<div style="left:2px;top:446.6px;width:4.6px;height:2.4px;background:#111"></div>
<div style="left:7.6px;top:446.6px;width:4.6px;height:2.4px;background:linear-gradient(90deg,#eee,#222)"></div>
<div style="left:13.2px;top:446.6px;width:4.6px;height:2.4px;background:#fff"></div>
<div style="left:14.2px;top:447px;width:2.6px;height:2px;background:#d23"></div>
<div style="left:862.4px;top:57.6px;width:9.6px;height:392px;background:#323232;border-left:0.600px solid #2a2a2a"></div>
<svg style="left:864.400px;top:61.400px" width="5" height="4" viewBox="0 0 5 4"><path d="M0 4L2.500 0 5 4z" fill="#e6e6e6"/></svg>
<div style="left:863.2px;top:288px;width:7.8px;height:8.2px;background:#8c8c8c"></div>
<div style="left:872px;top:47.2px;width:128px;height:402px;background:#2a2a2a"></div>
<div style="left:872px;top:47.2px;width:128px;height:7.4px;background:#2b2b2b"></div>
<svg style="left:993px;top:48.6px" width="4" height="3.4" viewBox="0 0 4 3.4"><path d="M0.3 0.3L1.7 1.7 0.3 3.1M2.2 0.3L3.6 1.7 2.2 3.1" stroke="#e0e0e0" stroke-width="0.7" fill="none"/></svg>
<div style="left:872.6px;top:54.5px;width:127.4px;height:8.3px;background:#323232"></div>
<div style="left:873px;top:54.5px;width:20.6px;height:8.8px;background:#4a4a4a"></div>
<div class="t" style="left:879px;top:54.85px;font-size:5.5px;line-height:8px;color:#f4f4f4;font-weight:700;">描边</div>
<div class="t" style="left:898px;top:54.85px;font-size:5.5px;line-height:8px;color:#a8a8a8;font-weight:400;">透明度</div>
<svg style="left:989.600px;top:56.65px" width="7" height="4.400" viewBox="0 0 7 4.400"><path d="M0 0.400h2.200L1.100 2z" fill="#ccc"/><path d="M3 0.500h3.800M3 2.200h3.800M3 3.900h3.800" stroke="#ccc" stroke-width="0.700"/></svg>
<svg style="left:875px;top:56.400px" width="3" height="5" viewBox="0 0 3 5"><path d="M0.300 2L1.500 0.400 2.700 2zM0.300 3h2.400L1.500 4.600z" fill="#ddd"/></svg>
<div style="left:872.6px;top:62.4px;width:127.4px;height:166px;background:#4a4a4a"></div>
<div class="t" style="left:889px;top:67.7px;font-size:6.5px;line-height:8px;color:#f0f0f0;font-weight:700;">粗细:</div>
<svg style="left:908.200px;top:67.800px" width="4.400" height="7.600" viewBox="0 0 4.400 7.600"><path d="M0.400 3L2.200 0.600 4 3zM0.400 4.600h3.600L2.200 7z" fill="#eee"/></svg>
<div style="left:907.4px;top:67px;width:6px;height:9px;background:#333;z-index:0"></div>
<svg style="left:908.200px;top:67.800px" width="4.400" height="7.600" viewBox="0 0 4.400 7.600"><path d="M0.400 3L2.200 0.600 4 3zM0.400 4.600h3.600L2.200 7z" fill="#eee"/></svg>
<div style="left:915.8px;top:67px;width:30px;height:9px;background:#a2a2a2;border:0.500px solid #c4c4c4"></div>
<div style="left:946.4px;top:67px;width:6.2px;height:9px;background:#3a3a3a;border:0.500px solid #2a2a2a"></div>
<svg style="left:948px;top:70.600px" width="3" height="2" viewBox="0 0 3 2"><path d="M0 0h3L1.500 2z" fill="#eee"/></svg>
<div class="t" style="left:889px;top:81.7px;font-size:6.5px;line-height:8px;color:#f0f0f0;font-weight:700;">端点:</div>
<div style="left:908px;top:81.2px;width:9.2px;height:9px;background:#303030;border:0.500px solid #1f1f1f"></div>
<svg style="left:909.6px;top:82.7px" width="6" height="6" viewBox="0 0 6 6"><path d="M1 0.600h4v2H4v0.800h1v2H1v-2h1V2.600H1z" fill="#f2f2f2"/></svg>
<div style="left:920px;top:81.2px;width:9.2px;height:9px;background:#303030;border:0.500px solid #1f1f1f"></div>
<svg style="left:921.6px;top:82.7px" width="6" height="6" viewBox="0 0 6 6"><path d="M5.600 0.800H2.800a2.200 2.200 0 0 0 0 4.400h2.800z" fill="#f2f2f2"/><path d="M2.600 3h3" stroke="#303030" stroke-width="0.800"/></svg>
<div style="left:932px;top:81.2px;width:9.2px;height:9px;background:#303030;border:0.500px solid #1f1f1f"></div>
<svg style="left:933.6px;top:82.7px" width="6" height="6" viewBox="0 0 6 6"><path d="M0.600 0.800h5v4.400h-5z" fill="#f2f2f2"/><path d="M2.400 3h3.200" stroke="#303030" stroke-width="0.800"/></svg>
<div class="t" style="left:889px;top:95.6px;font-size:6.5px;line-height:8px;color:#f0f0f0;font-weight:700;">边角:</div>
<div style="left:908px;top:95px;width:9.2px;height:9px;background:#303030;border:0.500px solid #1f1f1f"></div>
<svg style="left:909.6px;top:96.5px" width="6" height="6" viewBox="0 0 6 6"><path d="M0.600 0.600h5v2.200H2.800v2.800H0.600z" fill="#f2f2f2"/></svg>
<div style="left:920px;top:95px;width:9.2px;height:9px;background:#303030;border:0.500px solid #1f1f1f"></div>
<svg style="left:921.6px;top:96.5px" width="6" height="6" viewBox="0 0 6 6"><path d="M5.600 0.600H3a2.400 2.400 0 0 0-2.400 2.400v2.600h2.200V2.800h2.800z" fill="#f2f2f2"/></svg>
<div style="left:932px;top:95px;width:9.2px;height:9px;background:#303030;border:0.500px solid #1f1f1f"></div>
<svg style="left:933.6px;top:96.5px" width="6" height="6" viewBox="0 0 6 6"><path d="M5.600 0.600H2.400L0.600 2.400v3.200h2.200V2.800h2.800z" fill="#f2f2f2"/></svg>
<div class="t" style="left:950px;top:95.6px;font-size:6.5px;line-height:8px;color:#7c7c7c;font-weight:400;">限制:</div>
<div style="left:968.4px;top:95.4px;width:20.4px;height:8.6px;background:#777"></div>
<div class="t" style="left:991.2px;top:95.6px;font-size:5.6px;line-height:8px;color:#7c7c7c;font-weight:400;">x</div>
<div class="t" style="left:875px;top:109.5px;font-size:6.5px;line-height:8px;color:#7c7c7c;font-weight:400;">对齐描边:</div>
<div style="left:908px;top:109px;width:9.2px;height:9px;background:#474747;border:0.500px solid #5c5c5c"></div>
<svg style="left:909.6px;top:110.600px" width="6" height="6" viewBox="0 0 6 6"><path d="M0.600 0.600v4.800h4.800" stroke="#6c6c6c" stroke-width="1" fill="none"/><path d="M2 2h2v2" stroke="#6c6c6c" stroke-width="0.600" fill="none"/></svg>
<div style="left:920px;top:109px;width:9.2px;height:9px;background:#474747;border:0.500px solid #5c5c5c"></div>
<svg style="left:921.6px;top:110.600px" width="6" height="6" viewBox="0 0 6 6"><path d="M0.600 0.600v4.800h4.800" stroke="#6c6c6c" stroke-width="1" fill="none"/><path d="M2 2h2v2" stroke="#6c6c6c" stroke-width="0.600" fill="none"/></svg>
<div style="left:932px;top:109px;width:9.2px;height:9px;background:#474747;border:0.500px solid #5c5c5c"></div>
<svg style="left:933.6px;top:110.600px" width="6" height="6" viewBox="0 0 6 6"><path d="M0.600 0.600v4.800h4.800" stroke="#6c6c6c" stroke-width="1" fill="none"/><path d="M2 2h2v2" stroke="#6c6c6c" stroke-width="0.600" fill="none"/></svg>
<div style="left:874px;top:123.4px;width:124px;height:0.6px;background:#3c3c3c"></div>
<div style="left:876.8px;top:129px;width:4px;height:4px;background:#555;border:0.500px solid #999"></div>
<div style="left:877.6px;top:130.7px;width:2.4px;height:0.8px;background:#f0f0f0"></div>
<div class="t" style="left:884.4px;top:127.19999999999999px;font-size:6.5px;line-height:8px;color:#f0f0f0;font-weight:700;">虚线</div>
<div style="left:954.6px;top:126.8px;width:19px;height:8.6px;background:#474747;border:0.500px solid #5e5e5e"></div>
<svg style="left:957.1px;top:128.600px" width="14" height="5" viewBox="0 0 14 5"><path d="M0.500 4.500V0.500h13v4" stroke="#6a6a6a" stroke-width="0.800" fill="none" stroke-dasharray="2.600 1.400"/></svg>
<div style="left:974.6px;top:126.8px;width:19px;height:8.6px;background:#474747;border:0.500px solid #5e5e5e"></div>
<svg style="left:977.1px;top:128.600px" width="14" height="5" viewBox="0 0 14 5"><path d="M0.500 4.500V0.500h13v4" stroke="#6a6a6a" stroke-width="0.800" fill="none" stroke-dasharray="2.600 1.400"/></svg>
<div style="left:876.7px;top:141px;width:16.3px;height:8.2px;background:#6e6e6e"></div>
<div class="t" style="left:878.5px;top:150.6px;font-size:6.3px;line-height:8px;color:#7c7c7c;font-weight:400;">虚线</div>
<div style="left:895.5px;top:141px;width:16.3px;height:8.2px;background:#6e6e6e"></div>
<div class="t" style="left:897.3px;top:150.6px;font-size:6.3px;line-height:8px;color:#7c7c7c;font-weight:400;">间隙</div>
<div style="left:914.4px;top:141px;width:16.3px;height:8.2px;background:#6e6e6e"></div>
<div class="t" style="left:916.1999999999999px;top:150.6px;font-size:6.3px;line-height:8px;color:#7c7c7c;font-weight:400;">虚线</div>
<div style="left:933.3px;top:141px;width:16.3px;height:8.2px;background:#6e6e6e"></div>
<div class="t" style="left:935.0999999999999px;top:150.6px;font-size:6.3px;line-height:8px;color:#7c7c7c;font-weight:400;">间隙</div>
<div style="left:952.3px;top:141px;width:16.3px;height:8.2px;background:#6e6e6e"></div>
<div class="t" style="left:954.0999999999999px;top:150.6px;font-size:6.3px;line-height:8px;color:#7c7c7c;font-weight:400;">虚线</div>
<div style="left:971.3px;top:141px;width:16.3px;height:8.2px;background:#6e6e6e"></div>
<div class="t" style="left:973.0999999999999px;top:150.6px;font-size:6.3px;line-height:8px;color:#7c7c7c;font-weight:400;">间隙</div>
<div class="t" style="left:889.4px;top:166.6px;font-size:6.5px;line-height:8px;color:#7c7c7c;font-weight:400;">箭头:</div>
<div style="left:907px;top:166.2px;width:21.8px;height:8.6px;background:#777"></div>
<div style="left:929.4px;top:166.2px;width:6px;height:8.6px;background:#454545;border:0.500px solid #5a5a5a"></div>
<svg style="left:931px;top:169.600px" width="2.800" height="1.800" viewBox="0 0 3 2"><path d="M0 0h3L1.500 2z" fill="#8a8a8a"/></svg>
<div style="left:944px;top:166.2px;width:21.8px;height:8.6px;background:#777"></div>
<div style="left:966.4px;top:166.2px;width:6px;height:8.6px;background:#454545;border:0.500px solid #5a5a5a"></div>
<svg style="left:968px;top:169.600px" width="2.800" height="1.800" viewBox="0 0 3 2"><path d="M0 0h3L1.500 2z" fill="#8a8a8a"/></svg>
<svg style="left:984.400px;top:167.600px" width="6.400" height="6" viewBox="0 0 6.400 6"><path d="M0.400 1.600h5M4.200 0.400l1.400 1.200-1.400 1.200M6 4.400H1M2.200 3.200L0.800 4.400l1.400 1.200" stroke="#7a7a7a" stroke-width="0.600" fill="none"/></svg>
<div class="t" style="left:889.4px;top:182.4px;font-size:6.5px;line-height:8px;color:#7c7c7c;font-weight:400;">缩放:</div>
<div style="left:907.6px;top:182px;width:28.4px;height:8.6px;background:#777"></div>
<div style="left:907.6px;top:182px;width:5.6px;height:8.6px;background:#444"></div>
<svg style="left:908.4px;top:183px" width="4" height="6.600" viewBox="0 0 4 6.600"><path d="M0.300 2.600L2 0.400 3.700 2.600zM0.300 4h3.400L2 6.200z" fill="#9a9a9a"/></svg>
<div class="t" style="left:915.2px;top:182.4px;font-size:6.3px;line-height:8px;color:#8e8e8e;font-weight:400;">100%</div>
<div style="left:944px;top:182px;width:28.4px;height:8.6px;background:#777"></div>
<div style="left:944px;top:182px;width:5.6px;height:8.6px;background:#444"></div>
<svg style="left:944.8px;top:183px" width="4" height="6.600" viewBox="0 0 4 6.600"><path d="M0.300 2.600L2 0.400 3.700 2.600zM0.300 4h3.400L2 6.200z" fill="#9a9a9a"/></svg>
<div class="t" style="left:951.6px;top:182.4px;font-size:6.3px;line-height:8px;color:#8e8e8e;font-weight:400;">100%</div>
<svg style="left:985.400px;top:182.400px" width="4.400" height="8" viewBox="0 0 4.400 8"><rect x="0.600" y="0.600" width="3.200" height="3.200" rx="1.400" fill="none" stroke="#6e6e6e" stroke-width="0.700"/><rect x="0.600" y="4.200" width="3.200" height="3.200" rx="1.400" fill="none" stroke="#6e6e6e" stroke-width="0.700"/></svg>
<div class="t" style="left:889.4px;top:197.8px;font-size:6.5px;line-height:8px;color:#7c7c7c;font-weight:400;">对齐:</div>
<div style="left:907px;top:197.4px;width:10.6px;height:8.6px;background:#474747;border:0.500px solid #5e5e5e"></div>
<svg style="left:908.8px;top:199.600px" width="7" height="4" viewBox="0 0 7 4"><path d="M0 2h4.600M3.600 0.400L6 2 3.600 3.600" stroke="#7a7a7a" stroke-width="0.700" fill="none"/></svg>
<div style="left:918.8px;top:197.4px;width:10.6px;height:8.6px;background:#474747;border:0.500px solid #5e5e5e"></div>
<svg style="left:920.5999999999999px;top:199.600px" width="7" height="4" viewBox="0 0 7 4"><path d="M0 2h4.600M3.600 0.400L6 2 3.600 3.600" stroke="#7a7a7a" stroke-width="0.700" fill="none"/></svg>
<div style="left:874px;top:209.4px;width:124px;height:0.6px;background:#3c3c3c"></div>
<div class="t" style="left:875px;top:215.6px;font-size:6.5px;line-height:8px;color:#7c7c7c;font-weight:400;">配置文件:</div>
<div style="left:907px;top:215px;width:51.4px;height:9px;background:#777"></div>
<div style="left:959px;top:215px;width:7px;height:9px;background:#454545;border:0.500px solid #5a5a5a"></div>
<svg style="left:961.100px;top:218.600px" width="2.800" height="1.800" viewBox="0 0 3 2"><path d="M0 0h3L1.500 2z" fill="#8a8a8a"/></svg>
<svg style="left:974px;top:216.400px" width="6" height="6.400" viewBox="0 0 6 6.400"><path d="M0.400 3.200l2-2v4zM5.600 0.600v5.200" stroke="#737373" stroke-width="0.700" fill="none"/></svg>
<svg style="left:985.600px;top:216px" width="6.800" height="6.800" viewBox="0 0 6.800 6.800"><path d="M0.400 0.600h6M3.400 2l2 2.200h-4z" stroke="#737373" stroke-width="0.700" fill="none"/></svg>
<div style="left:872.6px;top:230.2px;width:127.4px;height:8.4px;background:#323232"></div>
<div style="left:873px;top:230.2px;width:19.4px;height:8.9px;background:#4a4a4a"></div>
<div class="t" style="left:879px;top:230.59999999999997px;font-size:5.5px;line-height:8px;color:#f4f4f4;font-weight:700;">对齐</div>
<div class="t" style="left:898px;top:230.59999999999997px;font-size:5.5px;line-height:8px;color:#c4c4c4;font-weight:400;">变换</div>
<div class="t" style="left:917px;top:230.59999999999997px;font-size:5.5px;line-height:8px;color:#c4c4c4;font-weight:400;">路径查找器</div>
<svg style="left:989.600px;top:232.39999999999998px" width="7" height="4.400" viewBox="0 0 7 4.400"><path d="M0 0.400h2.200L1.100 2z" fill="#ccc"/><path d="M3 0.500h3.800M3 2.200h3.800M3 3.900h3.800" stroke="#ccc" stroke-width="0.700"/></svg>
<svg style="left:875px;top:232.200px" width="3" height="5" viewBox="0 0 3 5"><path d="M0.300 2L1.500 0.400 2.700 2zM0.300 3h2.400L1.500 4.600z" fill="#ddd"/></svg>
<div style="left:872.6px;top:238.6px;width:127.4px;height:89px;background:#4a4a4a"></div>
<div class="t" style="left:875px;top:241.8px;font-size:6.5px;line-height:8px;color:#f0f0f0;font-weight:700;">对齐对象:</div>
<svg style="left:878.1px;top:255.2px" width="7.0" height="7.0" viewBox="0 0 8 8"><path d="M0.4 0v8" stroke="#d2d2d2" stroke-width="0.8"/><rect x="1.4" y="0.8" width="3.4" height="2.6" fill="#d2d2d2"/><rect x="1.4" y="4.6" width="6" height="2.6" fill="none" stroke="#d2d2d2" stroke-width="0.7"/></svg>
<svg style="left:896.9px;top:255.2px" width="7.0" height="7.0" viewBox="0 0 8 8"><path d="M4 0v8" stroke="#d2d2d2" stroke-width="0.7"/><rect x="2.4" y="0.8" width="3.2" height="2.6" fill="#d2d2d2"/><rect x="0.8" y="4.6" width="6.4" height="2.6" fill="none" stroke="#d2d2d2" stroke-width="0.7"/></svg>
<svg style="left:916.1px;top:255.2px" width="7.0" height="7.0" viewBox="0 0 8 8"><path d="M7.6 0v8" stroke="#d2d2d2" stroke-width="0.8"/><rect x="3.2" y="0.8" width="3.4" height="2.6" fill="#d2d2d2"/><rect x="0.6" y="4.6" width="6" height="2.6" fill="none" stroke="#d2d2d2" stroke-width="0.7"/></svg>
<svg style="left:946.5px;top:255.2px" width="7.0" height="7.0" viewBox="0 0 8 8"><path d="M0 0.4h8" stroke="#d2d2d2" stroke-width="0.8"/><rect x="0.8" y="1.4" width="2.6" height="6" fill="none" stroke="#d2d2d2" stroke-width="0.7"/><rect x="4.6" y="1.4" width="2.6" height="3.4" fill="#d2d2d2"/></svg>
<svg style="left:965.5px;top:255.2px" width="7.0" height="7.0" viewBox="0 0 8 8"><path d="M0 4h8" stroke="#d2d2d2" stroke-width="0.7"/><rect x="0.8" y="0.8" width="2.6" height="6.4" fill="none" stroke="#d2d2d2" stroke-width="0.7"/><rect x="4.6" y="2.4" width="2.6" height="3.2" fill="#d2d2d2"/></svg>
<svg style="left:984.5px;top:255.2px" width="7.0" height="7.0" viewBox="0 0 8 8"><path d="M0 7.6h8" stroke="#d2d2d2" stroke-width="0.8"/><rect x="0.8" y="0.6" width="2.6" height="6" fill="none" stroke="#d2d2d2" stroke-width="0.7"/><rect x="4.6" y="3.2" width="2.6" height="3.4" fill="#d2d2d2"/></svg>
<div class="t" style="left:875px;top:271.7px;font-size:6.5px;line-height:8px;color:#f0f0f0;font-weight:700;">分布对象:</div>
<svg style="left:878.1px;top:284.6px" width="7.0" height="7.0" viewBox="0 0 8 8"><path d="M0 0.6h8M0 4.6h8" stroke="#d2d2d2" stroke-width="0.7"/><rect x="2.4" y="1.2" width="3.2" height="2" fill="#d2d2d2"/><rect x="1" y="5.2" width="6" height="2.2" fill="none" stroke="#d2d2d2" stroke-width="0.7"/></svg>
<svg style="left:896.9px;top:284.6px" width="7.0" height="7.0" viewBox="0 0 8 8"><path d="M0 2h8M0 6h8" stroke="#d2d2d2" stroke-width="0.7"/><rect x="2.4" y="1" width="3.2" height="2" fill="#d2d2d2"/><rect x="1" y="4.8" width="6" height="2.4" fill="none" stroke="#d2d2d2" stroke-width="0.7"/></svg>
<svg style="left:916.1px;top:284.6px" width="7.0" height="7.0" viewBox="0 0 8 8"><path d="M0 3.4h8M0 7.6h8" stroke="#d2d2d2" stroke-width="0.7"/><rect x="2.4" y="1.2" width="3.2" height="2" fill="#d2d2d2"/><rect x="1" y="5" width="6" height="2.2" fill="none" stroke="#d2d2d2" stroke-width="0.7"/></svg>
<svg style="left:946.5px;top:284.6px" width="7.0" height="7.0" viewBox="0 0 8 8"><path d="M0.6 0v8M4.6 0v8" stroke="#d2d2d2" stroke-width="0.7"/><rect x="1.2" y="2.4" width="2" height="3.2" fill="#d2d2d2"/><rect x="5.2" y="1" width="2.2" height="6" fill="none" stroke="#d2d2d2" stroke-width="0.7"/></svg>
<svg style="left:965.5px;top:284.6px" width="7.0" height="7.0" viewBox="0 0 8 8"><path d="M2 0v8M6 0v8" stroke="#d2d2d2" stroke-width="0.7"/><rect x="1" y="2.4" width="2" height="3.2" fill="#d2d2d2"/><rect x="4.8" y="1" width="2.4" height="6" fill="none" stroke="#d2d2d2" stroke-width="0.7"/></svg>
<svg style="left:984.5px;top:284.6px" width="7.0" height="7.0" viewBox="0 0 8 8"><path d="M3.4 0v8M7.6 0v8" stroke="#d2d2d2" stroke-width="0.7"/><rect x="1.2" y="2.4" width="2" height="3.2" fill="#d2d2d2"/><rect x="5" y="1" width="2.2" height="6" fill="none" stroke="#d2d2d2" stroke-width="0.7"/></svg>
<div class="t" style="left:875px;top:301.4px;font-size:6.5px;line-height:8px;color:#f0f0f0;font-weight:700;">分布间距:</div>
<div class="t" style="left:979px;top:301.4px;font-size:6.5px;line-height:8px;color:#f0f0f0;font-weight:700;">对齐:</div>
<svg style="left:878.4px;top:314.6px" width="7.0" height="7.0" viewBox="0 0 8 8"><path d="M0 3.4h8M0 7.6h8" stroke="#d2d2d2" stroke-width="0.7"/><rect x="2.4" y="1.2" width="3.2" height="2" fill="#d2d2d2"/><rect x="1" y="5" width="6" height="2.2" fill="none" stroke="#d2d2d2" stroke-width="0.7"/></svg>
<svg style="left:894.8px;top:314.6px" width="7.0" height="7.0" viewBox="0 0 8 8"><path d="M3.4 0v8M7.6 0v8" stroke="#d2d2d2" stroke-width="0.7"/><rect x="1.2" y="2.4" width="2" height="3.2" fill="#d2d2d2"/><rect x="5" y="1" width="2.2" height="6" fill="none" stroke="#d2d2d2" stroke-width="0.7"/></svg>
<div style="left:908.4px;top:313.7px;width:40.4px;height:8.4px;background:#6e6e6e;border:0.500px solid #808080"></div>
<div style="left:908.4px;top:313.7px;width:5.6px;height:8.4px;background:#444"></div>
<svg style="left:909.200px;top:314.600px" width="4" height="6.600" viewBox="0 0 4 6.600"><path d="M0.300 2.600L2 0.400 3.700 2.600zM0.300 4h3.400L2 6.200z" fill="#9a9a9a"/></svg>
<div class="t" style="left:916.4px;top:314.0px;font-size:5.4px;line-height:8px;color:#8a8a8a;font-weight:400;">0 px</div>
<svg style="left:980px;top:314.400px" width="11.400" height="7.400" viewBox="0 0 11.400 7.400"><rect x="0.500" y="0.500" width="6.400" height="6.400" fill="none" stroke="#e2e2e2" stroke-width="0.800" stroke-dasharray="1.200 0.800"/><rect x="2.300" y="2.300" width="2.800" height="2.800" fill="#e2e2e2"/><path d="M8.200 3h3L9.700 5z" fill="#e2e2e2"/></svg>
<div style="left:872.6px;top:329px;width:127.4px;height:8.4px;background:#323232"></div>
<div style="left:874.4px;top:329px;width:14.6px;height:8.9px;background:#4a4a4a"></div>
<div class="t" style="left:877.6px;top:329.4px;font-size:5.5px;line-height:8px;color:#f4f4f4;font-weight:700;">图层</div>
<div class="t" style="left:894.6px;top:329.4px;font-size:5.5px;line-height:8px;color:#c4c4c4;font-weight:400;">画板</div>
<div class="t" style="left:913.4px;top:329.4px;font-size:5.5px;line-height:8px;color:#c4c4c4;font-weight:400;">字符</div>
<div class="t" style="left:931.6px;top:329.4px;font-size:5.5px;line-height:8px;color:#c4c4c4;font-weight:400;">段落</div>
<svg style="left:989.600px;top:331.2px" width="7" height="4.400" viewBox="0 0 7 4.400"><path d="M0 0.400h2.200L1.100 2z" fill="#ccc"/><path d="M3 0.500h3.800M3 2.200h3.800M3 3.900h3.800" stroke="#ccc" stroke-width="0.700"/></svg>
<div style="left:872.6px;top:337.4px;width:127.4px;height:112px;background:#4a4a4a"></div>
<div style="left:874.4px;top:341.2px;width:125.6px;height:10.9px;background:#454545;border-bottom:0.600px solid #383838"></div>
<svg style="left:877.400px;top:344.10px" width="7.400" height="5" viewBox="0 0 7.400 5"><path d="M0.300 2.500C1.800 0.300 5.600 0.300 7.100 2.500 5.600 4.700 1.800 4.700 0.300 2.500z" fill="none" stroke="#d8d8d8" stroke-width="0.700"/><circle cx="3.700" cy="2.500" r="1.200" fill="#d8d8d8"/></svg>
<svg style="left:902.600px;top:345.05px" width="4" height="3.200" viewBox="0 0 4 3.200"><path d="M0 0h4L2 3.200z" fill="#e8e8e8"/></svg>
<div style="left:911.7px;top:342.4px;width:8.8px;height:8.6px;background:#fff;border:0.500px solid #333"></div>
<div class="t" style="left:923px;top:342.75px;font-size:6.9px;line-height:8px;color:#f0f0f0;font-weight:400;">图层 1</div>
<svg style="left:980px;top:343.15px" width="16" height="7" viewBox="0 0 16 7"><circle cx="3.5" cy="3.5" r="2.3" fill="none" stroke="#b8b8b8" stroke-width="0.9"/><rect x="8.9" y="1.5" width="4" height="4" fill="#2f63e0" stroke="#dfe6fa" stroke-width="0.6"/></svg>
<div style="left:874.4px;top:352.09999999999997px;width:125.6px;height:10.9px;background:#5a5a5a;border-bottom:0.600px solid #383838"></div>
<svg style="left:877.400px;top:355.00px" width="7.400" height="5" viewBox="0 0 7.400 5"><path d="M0.300 2.500C1.800 0.300 5.600 0.300 7.100 2.500 5.600 4.700 1.800 4.700 0.300 2.500z" fill="none" stroke="#d8d8d8" stroke-width="0.700"/><circle cx="3.700" cy="2.500" r="1.200" fill="#d8d8d8"/></svg>
<svg style="left:913px;top:355.55px" width="3.200" height="4" viewBox="0 0 3.200 4"><path d="M0 0v4L3.200 2z" fill="#e8e8e8"/></svg>
<div style="left:922.4px;top:353.29999999999995px;width:8.8px;height:8.6px;background:#fff;border:0.500px solid #333"></div>
<div class="t" style="left:934px;top:353.65px;font-size:6.9px;line-height:8px;color:#f0f0f0;font-weight:400;">&lt;编组&gt;</div>
<svg style="left:980px;top:354.05px" width="16" height="7" viewBox="0 0 16 7"><circle cx="3.5" cy="3.5" r="2.3" fill="none" stroke="#b8b8b8" stroke-width="0.9"/><circle cx="3.5" cy="3.5" r="1.3" fill="none" stroke="#8a8a8a" stroke-width="0.6"/><rect x="8.9" y="1.5" width="4" height="4" fill="#2f63e0" stroke="#dfe6fa" stroke-width="0.6"/></svg>
<div style="left:874.4px;top:363.0px;width:125.6px;height:10.9px;background:#5a5a5a;border-bottom:0.600px solid #383838"></div>
<svg style="left:877.400px;top:365.90px" width="7.400" height="5" viewBox="0 0 7.400 5"><path d="M0.300 2.500C1.800 0.300 5.600 0.300 7.100 2.500 5.600 4.700 1.800 4.700 0.300 2.500z" fill="none" stroke="#d8d8d8" stroke-width="0.700"/><circle cx="3.700" cy="2.500" r="1.200" fill="#d8d8d8"/></svg>
<svg style="left:913px;top:366.45px" width="3.200" height="4" viewBox="0 0 3.200 4"><path d="M0 0v4L3.200 2z" fill="#e8e8e8"/></svg>
<div style="left:922.4px;top:364.2px;width:8.8px;height:8.6px;background:#fff;border:0.500px solid #333"></div>
<div class="t" style="left:934px;top:364.55px;font-size:6.9px;line-height:8px;color:#f0f0f0;font-weight:400;">&lt;编组&gt;</div>
<svg style="left:980px;top:364.95px" width="16" height="7" viewBox="0 0 16 7"><circle cx="3.5" cy="3.5" r="2.3" fill="none" stroke="#b8b8b8" stroke-width="0.9"/><circle cx="3.5" cy="3.5" r="1.3" fill="none" stroke="#8a8a8a" stroke-width="0.6"/><rect x="8.9" y="1.5" width="4" height="4" fill="#2f63e0" stroke="#dfe6fa" stroke-width="0.6"/></svg>
<div style="left:874.4px;top:373.9px;width:125.6px;height:10.9px;background:#5a5a5a;border-bottom:0.600px solid #383838"></div>
<svg style="left:877.400px;top:376.80px" width="7.400" height="5" viewBox="0 0 7.400 5"><path d="M0.300 2.500C1.800 0.300 5.600 0.300 7.100 2.500 5.600 4.700 1.800 4.700 0.300 2.500z" fill="none" stroke="#d8d8d8" stroke-width="0.700"/><circle cx="3.700" cy="2.500" r="1.200" fill="#d8d8d8"/></svg>
<svg style="left:913px;top:377.35px" width="3.200" height="4" viewBox="0 0 3.200 4"><path d="M0 0v4L3.200 2z" fill="#e8e8e8"/></svg>
<div style="left:922.4px;top:375.09999999999997px;width:8.8px;height:8.6px;background:#7fe03a;border:0.500px solid #333"></div>
<div class="t" style="left:934px;top:375.45px;font-size:6.9px;line-height:8px;color:#f0f0f0;font-weight:400;">&lt;编组&gt;</div>
<svg style="left:980px;top:375.85px" width="16" height="7" viewBox="0 0 16 7"><circle cx="3.5" cy="3.5" r="2.3" fill="none" stroke="#b8b8b8" stroke-width="0.9"/><circle cx="3.5" cy="3.5" r="1.3" fill="none" stroke="#8a8a8a" stroke-width="0.6"/><rect x="8.9" y="1.5" width="4" height="4" fill="#2f63e0" stroke="#dfe6fa" stroke-width="0.6"/></svg>
<div style="left:874.4px;top:384.8px;width:125.6px;height:10.9px;background:#5a5a5a;border-bottom:0.600px solid #383838"></div>
<svg style="left:877.400px;top:387.70px" width="7.400" height="5" viewBox="0 0 7.400 5"><path d="M0.300 2.500C1.800 0.300 5.600 0.300 7.100 2.500 5.600 4.700 1.800 4.700 0.300 2.500z" fill="none" stroke="#d8d8d8" stroke-width="0.700"/><circle cx="3.700" cy="2.500" r="1.200" fill="#d8d8d8"/></svg>
<svg style="left:913px;top:388.25px" width="3.200" height="4" viewBox="0 0 3.200 4"><path d="M0 0v4L3.200 2z" fill="#e8e8e8"/></svg>
<div style="left:922.4px;top:386.0px;width:8.8px;height:8.6px;background:#fff;border:0.500px solid #333"></div>
<div class="t" style="left:934px;top:386.35px;font-size:6.9px;line-height:8px;color:#f0f0f0;font-weight:400;">&lt;编组&gt;</div>
<svg style="left:980px;top:386.75px" width="16" height="7" viewBox="0 0 16 7"><circle cx="3.5" cy="3.5" r="2.3" fill="none" stroke="#b8b8b8" stroke-width="0.9"/><circle cx="3.5" cy="3.5" r="1.3" fill="none" stroke="#8a8a8a" stroke-width="0.6"/><rect x="8.9" y="1.5" width="4" height="4" fill="#2f63e0" stroke="#dfe6fa" stroke-width="0.6"/></svg>
<div style="left:874.4px;top:395.7px;width:125.6px;height:10.9px;background:#5a5a5a;border-bottom:0.600px solid #383838"></div>
<svg style="left:877.400px;top:398.60px" width="7.400" height="5" viewBox="0 0 7.400 5"><path d="M0.300 2.500C1.800 0.300 5.600 0.300 7.100 2.500 5.600 4.700 1.800 4.700 0.300 2.500z" fill="none" stroke="#d8d8d8" stroke-width="0.700"/><circle cx="3.700" cy="2.500" r="1.200" fill="#d8d8d8"/></svg>
<svg style="left:913px;top:399.15px" width="3.200" height="4" viewBox="0 0 3.200 4"><path d="M0 0v4L3.200 2z" fill="#e8e8e8"/></svg>
<div style="left:922.4px;top:396.9px;width:8.8px;height:8.6px;background:#fff;border:0.500px solid #333"></div>
<div class="t" style="left:934px;top:397.25px;font-size:6.9px;line-height:8px;color:#f0f0f0;font-weight:400;">&lt;编组&gt;</div>
<svg style="left:980px;top:397.65px" width="16" height="7" viewBox="0 0 16 7"><circle cx="3.5" cy="3.5" r="2.3" fill="none" stroke="#b8b8b8" stroke-width="0.9"/><circle cx="3.5" cy="3.5" r="1.3" fill="none" stroke="#8a8a8a" stroke-width="0.6"/><rect x="8.9" y="1.5" width="4" height="4" fill="#2f63e0" stroke="#dfe6fa" stroke-width="0.6"/></svg>
<div style="left:874.4px;top:406.6px;width:125.6px;height:10.9px;background:#5a5a5a;border-bottom:0.600px solid #383838"></div>
<svg style="left:877.400px;top:409.50px" width="7.400" height="5" viewBox="0 0 7.400 5"><path d="M0.300 2.500C1.800 0.300 5.600 0.300 7.100 2.500 5.600 4.700 1.800 4.700 0.300 2.500z" fill="none" stroke="#d8d8d8" stroke-width="0.700"/><circle cx="3.700" cy="2.500" r="1.200" fill="#d8d8d8"/></svg>
<svg style="left:913px;top:410.05px" width="3.200" height="4" viewBox="0 0 3.200 4"><path d="M0 0v4L3.200 2z" fill="#e8e8e8"/></svg>
<div style="left:922.4px;top:407.8px;width:8.8px;height:8.6px;background:#fff;border:0.500px solid #333"></div>
<div class="t" style="left:934px;top:408.15000000000003px;font-size:6.9px;line-height:8px;color:#f0f0f0;font-weight:400;">&lt;编组&gt;</div>
<svg style="left:980px;top:408.55px" width="16" height="7" viewBox="0 0 16 7"><circle cx="3.5" cy="3.5" r="2.3" fill="none" stroke="#b8b8b8" stroke-width="0.9"/><circle cx="3.5" cy="3.5" r="1.3" fill="none" stroke="#8a8a8a" stroke-width="0.6"/><rect x="8.9" y="1.5" width="4" height="4" fill="#2f63e0" stroke="#dfe6fa" stroke-width="0.6"/></svg>
<div style="left:874.4px;top:417.5px;width:125.6px;height:10.9px;background:#4c4c4c;border-bottom:0.600px solid #383838"></div>
<svg style="left:913px;top:420.95px" width="3.200" height="4" viewBox="0 0 3.200 4"><path d="M0 0v4L3.200 2z" fill="#e8e8e8"/></svg>
<div style="left:922.4px;top:418.7px;width:8.8px;height:8.6px;background:#fff;border:0.500px solid #333"></div>
<div style="left:923px;top:421.7px;width:7.6px;height:2.6px;background:#2a2f7c"></div>
<div class="t" style="left:934px;top:419.05px;font-size:6.9px;line-height:8px;color:#f0f0f0;font-weight:400;">&lt;编组&gt;</div>
<svg style="left:980px;top:419.45px" width="16" height="7" viewBox="0 0 16 7"><ellipse cx="3.5" cy="3.5" rx="2.4" ry="2" fill="none" stroke="#8a8a8a" stroke-width="0.7"/></svg>
<div style="left:886px;top:341.2px;width:0.6px;height:87.2px;background:#383838"></div>
<div style="left:896.6px;top:341.2px;width:0.6px;height:87.2px;background:#383838"></div>
<div style="left:978.6px;top:341.2px;width:0.6px;height:87.2px;background:#383838"></div>
<div style="left:897.6px;top:341.2px;width:1.6px;height:87.2px;background:#3f74e6"></div>
<div style="left:129.4px;top:11.3px;width:113.8px;height:333px;background:#ced0d2;border-radius:0 0 3px 3px;box-shadow:0 4px 7px -2px rgba(0,0,0,.5),0 0 1.2px rgba(0,0,0,.35);overflow:hidden">
<div style="left:75.6px;top:162.7px;width:80px;height:400px;background:rgba(255,255,255,.6);filter:blur(9px)"></div>
<div style="left:-20px;top:-20px;width:160px;height:64px;background:rgba(60,70,80,.10);filter:blur(4px)"></div>
<div style="left:-4px;top:0;width:8px;height:48px;background:rgba(255,255,255,.35);filter:blur(2.5px)"></div>
<div style="left:108.8px;top:50px;width:10px;height:120px;background:rgba(255,255,255,.3);filter:blur(3px)"></div>
<div style="left:-20px;top:150px;width:62px;height:230px;background:rgba(255,255,255,.3);filter:blur(12px)"></div>
</div>
<div class="t" style="left:140.4px;top:13.799999999999997px;font-size:7.1px;line-height:10px;color:#161616;font-weight:500;letter-spacing:0px">变换</div>
<svg style="left:232.200px;top:16.10px" width="4.400" height="4.600" viewBox="0 0 4.400 4.600"><path d="M0 0v4.600L4.400 2.300z" fill="#161616"/></svg>
<div class="t" style="left:140.4px;top:23.799999999999997px;font-size:7.1px;line-height:10px;color:#161616;font-weight:500;letter-spacing:0px">排列</div>
<svg style="left:232.200px;top:26.10px" width="4.400" height="4.600" viewBox="0 0 4.400 4.600"><path d="M0 0v4.600L4.400 2.300z" fill="#161616"/></svg>
<div style="left:129.4px;top:36.2px;width:113.8px;height:0.8px;background:#bcbec0"></div>
<div class="t" style="left:140.4px;top:39.8px;font-size:7.1px;line-height:10px;color:#161616;font-weight:500;letter-spacing:0px">编组</div>
<div class="t" style="right:759.8px;top:39.8px;font-size:7.1px;line-height:10px;color:#161616;font-weight:400;-webkit-text-stroke:0.25px #161616">⌘G</div>
<div class="t" style="left:140.4px;top:49.5px;font-size:7.1px;line-height:10px;color:#161616;font-weight:500;letter-spacing:0px">取消编组</div>
<div class="t" style="right:759.8px;top:49.5px;font-size:7.1px;line-height:10px;color:#161616;font-weight:400;-webkit-text-stroke:0.25px #161616">⇧⌘G</div>
<div class="t" style="left:140.4px;top:59.2px;font-size:7.1px;line-height:10px;color:#161616;font-weight:500;letter-spacing:0px">锁定</div>
<svg style="left:232.200px;top:61.50px" width="4.400" height="4.600" viewBox="0 0 4.400 4.600"><path d="M0 0v4.600L4.400 2.300z" fill="#161616"/></svg>
<div class="t" style="left:140.4px;top:69.10000000000001px;font-size:7.1px;line-height:10px;color:#a9abad;font-weight:400;letter-spacing:0px">全部解锁</div>
<div class="t" style="right:759.8px;top:69.10000000000001px;font-size:7.1px;line-height:10px;color:#a9abad;font-weight:400;-webkit-text-stroke:0.25px #a9abad">⌥⌘2</div>
<div class="t" style="left:140.4px;top:79.0px;font-size:7.1px;line-height:10px;color:#161616;font-weight:500;letter-spacing:0px">隐藏</div>
<svg style="left:232.200px;top:81.30px" width="4.400" height="4.600" viewBox="0 0 4.400 4.600"><path d="M0 0v4.600L4.400 2.300z" fill="#161616"/></svg>
<div class="t" style="left:140.4px;top:89.0px;font-size:7.1px;line-height:10px;color:#161616;font-weight:500;letter-spacing:0px">显示全部</div>
<div class="t" style="right:759.8px;top:89.0px;font-size:7.1px;line-height:10px;color:#161616;font-weight:400;-webkit-text-stroke:0.25px #161616">⌥⌘3</div>
<div style="left:129.4px;top:101.3px;width:113.8px;height:0.8px;background:#bcbec0"></div>
<div class="t" style="left:140.4px;top:105.5px;font-size:7.1px;line-height:10px;color:#a9abad;font-weight:400;letter-spacing:0px">扩展...</div>
<div class="t" style="right:759.8px;top:105.5px;font-size:7.1px;line-height:10px;color:#a9abad;font-weight:400;-webkit-text-stroke:0.25px #a9abad">⇧⌘O</div>
<div class="t" style="left:140.4px;top:115.4px;font-size:7.1px;line-height:10px;color:#161616;font-weight:500;letter-spacing:0px">扩展外观</div>
<div class="t" style="left:140.4px;top:125.20000000000002px;font-size:7.1px;line-height:10px;color:#161616;font-weight:500;letter-spacing:0px">栅格化...</div>
<div class="t" style="left:140.4px;top:135.1px;font-size:7.1px;line-height:10px;color:#a9abad;font-weight:400;letter-spacing:0px">创建渐变网格...</div>
<div class="t" style="left:140.4px;top:144.9px;font-size:7.1px;line-height:10px;color:#a9abad;font-weight:400;letter-spacing:0px">创建对象马赛克...</div>
<div class="t" style="left:140.4px;top:155.0px;font-size:7.1px;line-height:10px;color:#161616;font-weight:500;letter-spacing:0px">创建裁切标记</div>
<div class="t" style="left:140.4px;top:164.9px;font-size:7.1px;line-height:10px;color:#161616;font-weight:500;letter-spacing:0px">拼合透明度...</div>
<div style="left:129.4px;top:176.29999999999998px;width:113.8px;height:0.8px;background:#bcbec0"></div>
<div style="left:129.4px;top:180.6px;width:113.8px;height:10px;background:#2c74e8"></div>
<div class="t" style="left:140.4px;top:181.0px;font-size:7.1px;line-height:10px;color:#fff;font-weight:500;letter-spacing:0px">切片</div>
<svg style="left:232.200px;top:183.30px" width="4.400" height="4.600" viewBox="0 0 4.400 4.600"><path d="M0 0v4.600L4.400 2.300z" fill="#fff"/></svg>
<div style="left:129.4px;top:194.4px;width:113.8px;height:0.8px;background:#bcbec0"></div>
<div class="t" style="left:140.4px;top:197.4px;font-size:7.1px;line-height:10px;color:#161616;font-weight:500;letter-spacing:0px">路径</div>
<svg style="left:232.200px;top:199.70px" width="4.400" height="4.600" viewBox="0 0 4.400 4.600"><path d="M0 0v4.600L4.400 2.300z" fill="#161616"/></svg>
<div class="t" style="left:140.4px;top:207.20000000000002px;font-size:7.1px;line-height:10px;color:#161616;font-weight:500;letter-spacing:0px">形状</div>
<svg style="left:232.200px;top:209.50px" width="4.400" height="4.600" viewBox="0 0 4.400 4.600"><path d="M0 0v4.600L4.400 2.300z" fill="#161616"/></svg>
<div class="t" style="left:140.4px;top:217.1px;font-size:7.1px;line-height:10px;color:#161616;font-weight:500;letter-spacing:0px">图案</div>
<svg style="left:232.200px;top:219.40px" width="4.400" height="4.600" viewBox="0 0 4.400 4.600"><path d="M0 0v4.600L4.400 2.300z" fill="#161616"/></svg>
<div class="t" style="left:140.4px;top:226.9px;font-size:7.1px;line-height:10px;color:#161616;font-weight:500;letter-spacing:0px">混合</div>
<svg style="left:232.200px;top:229.20px" width="4.400" height="4.600" viewBox="0 0 4.400 4.600"><path d="M0 0v4.600L4.400 2.300z" fill="#161616"/></svg>
<div class="t" style="left:140.4px;top:236.70000000000002px;font-size:7.1px;line-height:10px;color:#161616;font-weight:500;letter-spacing:0px">封套扭曲</div>
<svg style="left:232.200px;top:239.00px" width="4.400" height="4.600" viewBox="0 0 4.400 4.600"><path d="M0 0v4.600L4.400 2.300z" fill="#161616"/></svg>
<div class="t" style="left:140.4px;top:246.5px;font-size:7.1px;line-height:10px;color:#161616;font-weight:500;letter-spacing:0px">透视</div>
<svg style="left:232.200px;top:248.80px" width="4.400" height="4.600" viewBox="0 0 4.400 4.600"><path d="M0 0v4.600L4.400 2.300z" fill="#161616"/></svg>
<div class="t" style="left:140.4px;top:256.4px;font-size:7.1px;line-height:10px;color:#161616;font-weight:500;letter-spacing:0px">实时上色</div>
<svg style="left:232.200px;top:258.70px" width="4.400" height="4.600" viewBox="0 0 4.400 4.600"><path d="M0 0v4.600L4.400 2.300z" fill="#161616"/></svg>
<div class="t" style="left:140.4px;top:266.2px;font-size:7.1px;line-height:10px;color:#161616;font-weight:500;letter-spacing:0px">图像描摹</div>
<svg style="left:232.200px;top:268.50px" width="4.400" height="4.600" viewBox="0 0 4.400 4.600"><path d="M0 0v4.600L4.400 2.300z" fill="#161616"/></svg>
<div class="t" style="left:140.4px;top:276.09999999999997px;font-size:7.1px;line-height:10px;color:#161616;font-weight:500;letter-spacing:0px">文本绕排</div>
<svg style="left:232.200px;top:278.40px" width="4.400" height="4.600" viewBox="0 0 4.400 4.600"><path d="M0 0v4.600L4.400 2.300z" fill="#161616"/></svg>
<div class="t" style="left:140.4px;top:286.0px;font-size:7.1px;line-height:10px;color:#161616;font-weight:500;letter-spacing:0.16px">Line 和 Sketch 图稿</div>
<svg style="left:232.200px;top:288.30px" width="4.400" height="4.600" viewBox="0 0 4.400 4.600"><path d="M0 0v4.600L4.400 2.300z" fill="#161616"/></svg>
<div style="left:129.4px;top:297.8px;width:113.8px;height:0.8px;background:#bcbec0"></div>
<div class="t" style="left:140.4px;top:302.4px;font-size:7.1px;line-height:10px;color:#161616;font-weight:500;letter-spacing:0px">剪切蒙版</div>
<svg style="left:232.200px;top:304.70px" width="4.400" height="4.600" viewBox="0 0 4.400 4.600"><path d="M0 0v4.600L4.400 2.300z" fill="#161616"/></svg>
<div class="t" style="left:140.4px;top:312.2px;font-size:7.1px;line-height:10px;color:#161616;font-weight:500;letter-spacing:0px">复合路径</div>
<svg style="left:232.200px;top:314.50px" width="4.400" height="4.600" viewBox="0 0 4.400 4.600"><path d="M0 0v4.600L4.400 2.300z" fill="#161616"/></svg>
<div class="t" style="left:140.4px;top:322.09999999999997px;font-size:7.1px;line-height:10px;color:#161616;font-weight:500;letter-spacing:0px">画板</div>
<svg style="left:232.200px;top:324.40px" width="4.400" height="4.600" viewBox="0 0 4.400 4.600"><path d="M0 0v4.600L4.400 2.300z" fill="#161616"/></svg>
<div class="t" style="left:140.4px;top:332.0px;font-size:7.1px;line-height:10px;color:#161616;font-weight:500;letter-spacing:0px">图表</div>
<svg style="left:232.200px;top:334.30px" width="4.400" height="4.600" viewBox="0 0 4.400 4.600"><path d="M0 0v4.600L4.400 2.300z" fill="#161616"/></svg>
<div style="left:243.4px;top:178.6px;width:72.4px;height:128px;background:#eceff2;border-radius:3px;box-shadow:0 3px 6px -1.5px rgba(0,0,0,.32),0 0 1px rgba(0,0,0,.3)"></div>
<div style="left:243.4px;top:180.79999999999998px;width:72.4px;height:9.8px;background:#2f7dee"></div>
<div class="t" style="left:254.8px;top:181.0px;font-size:7.1px;line-height:10px;color:#fff;font-weight:500;">建立</div>
<div class="t" style="left:254.8px;top:191.0px;font-size:7.1px;line-height:10px;color:#b9bcbf;font-weight:400;">释放</div>
<div style="left:243.4px;top:203.5px;width:72.4px;height:0.8px;background:#d3d6d9"></div>
<div class="t" style="left:254.8px;top:207.4px;font-size:7.1px;line-height:10px;color:#b9bcbf;font-weight:400;">从参考线创建</div>
<div class="t" style="left:254.8px;top:217.0px;font-size:7.1px;line-height:10px;color:#161616;font-weight:500;">从所选对象创建</div>
<div style="left:243.4px;top:229.6px;width:72.4px;height:0.8px;background:#d3d6d9"></div>
<div class="t" style="left:254.8px;top:233.1px;font-size:7.1px;line-height:10px;color:#b9bcbf;font-weight:400;">复制切片</div>
<div class="t" style="left:254.8px;top:242.9px;font-size:7.1px;line-height:10px;color:#b9bcbf;font-weight:400;">组合切片</div>
<div class="t" style="left:254.8px;top:252.7px;font-size:7.1px;line-height:10px;color:#b9bcbf;font-weight:400;">划分切片...</div>
<div class="t" style="left:254.8px;top:262.7px;font-size:7.1px;line-height:10px;color:#b9bcbf;font-weight:400;">全部删除</div>
<div style="left:243.4px;top:275.3px;width:72.4px;height:0.8px;background:#d3d6d9"></div>
<div class="t" style="left:254.8px;top:278.79999999999995px;font-size:7.1px;line-height:10px;color:#b9bcbf;font-weight:400;">切片选项...</div>
<div style="left:243.4px;top:290.90000000000003px;width:72.4px;height:0.8px;background:#d3d6d9"></div>
<div class="t" style="left:254.8px;top:294.9px;font-size:7.1px;line-height:10px;color:#161616;font-weight:500;">剪切到画板</div>
<div class="t" style="left:245.8px;top:294.7px;font-size:7.6px;line-height:10px;color:#161616;font-weight:700;">✓</div>
</div></body></html>
